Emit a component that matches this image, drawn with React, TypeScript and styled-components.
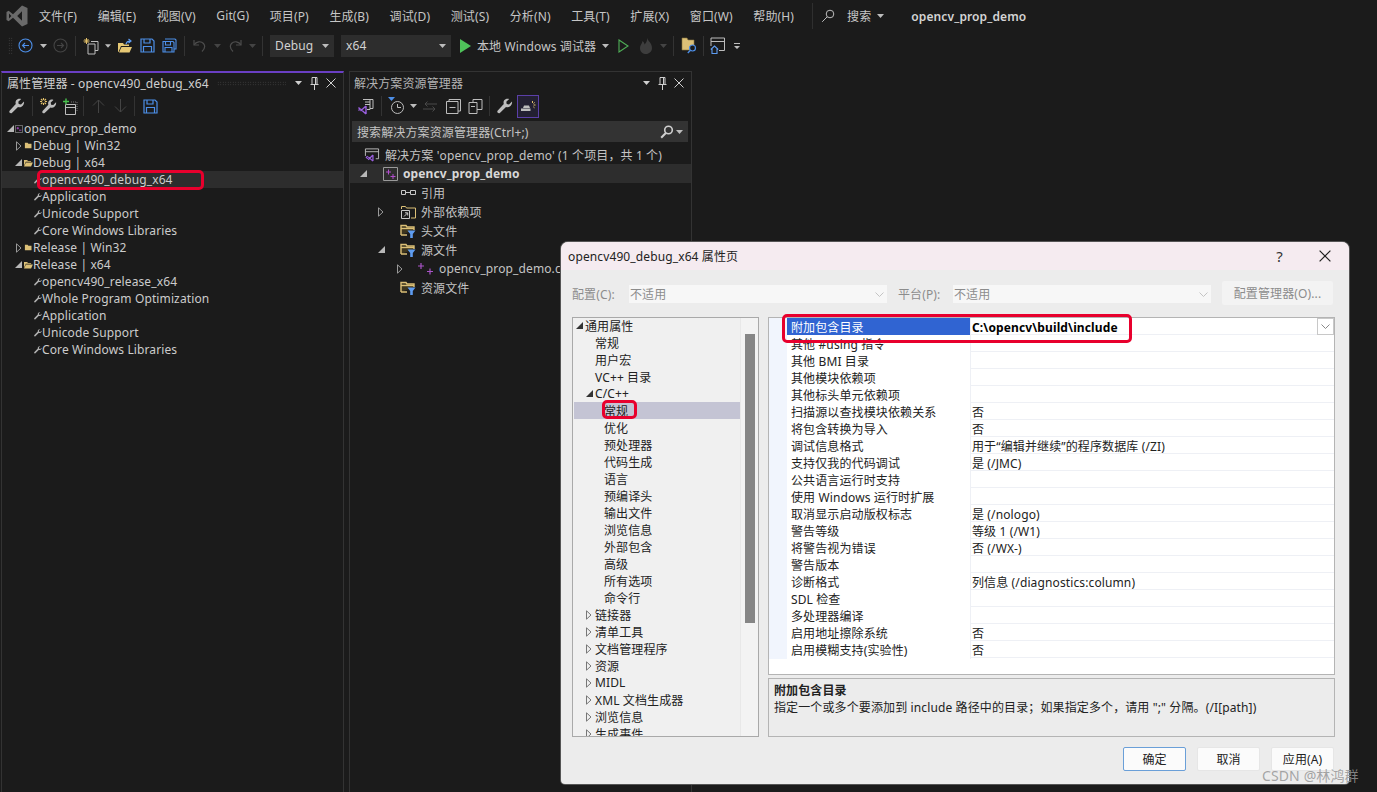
import React from "react";
import styled, { createGlobalStyle } from "styled-components";

const GlobalStyle = createGlobalStyle`
  html, body { margin: 0; padding: 0; background: #1b1b1b; }
  body { font-family: "Noto Sans", "Noto Sans CJK SC", sans-serif; font-size: 12px; letter-spacing: 0.12px; }
  * { box-sizing: border-box; }
`;

const Page = styled.div`
  position: relative;
  width: 1377px;
  height: 792px;
  overflow: hidden;
  background: #1b1b1b;
  color: #cfcfcf;
  display: flex;
  flex-direction: column;
`;

/* ---------- top bars ---------- */
const MenuBar = styled.div`
  height: 32px;
  flex: none;
  display: flex;
  align-items: center;
  padding-left: 5px;
`;
const MenuList = styled.div`
  display: flex;
  gap: 20.6px;
  margin-left: 10px;
  color: #c6c6c6;
  white-space: nowrap;
`;
const MenuSep = styled.div`
  width: 1px;
  height: 26px;
  background: #2f2f2f;
  margin-left: 18px;
`;
const SearchBox = styled.div`
  display: flex;
  align-items: center;
  margin-left: 6px;
  gap: 6px;
  color: #c6c6c6;
  svg { flex: none; }
`;
const SearchLabel = styled.span`
  margin-left: 4px;
`;
const ProjectName = styled.div`
  margin-left: 27px;
  font-weight: 600;
  color: #d4d4d4;
`;
const ToolBar = styled.div`
  height: 27px;
  flex: none;
  display: flex;
  align-items: center;
  padding-left: 8px;
`;
const Grip = styled.div`
  width: 5px;
  height: 18px;
  background-image: radial-gradient(#4a4a4a 0.7px, transparent 0.8px);
  background-size: 2.5px 2.5px;
`;
const Slot = styled.div<{ $w: number }>`
  flex: none;
  width: ${(p) => p.$w}px;
  height: 22px;
  display: flex;
  align-items: center;
  justify-content: center;
`;
const ActiveSlot = styled(Slot)`
  border: 1px solid #5b3fa8;
  background: #232032;
  height: 23px;
`;
const Sep = styled.div<{ $x?: number }>`
  flex: none;
  width: 1px;
  height: 20px;
  background: #333;
  margin: 0 ${(p) => p.$x ?? 0}px;
`;
const Combo = styled.div<{ $w: number }>`
  flex: none;
  width: ${(p) => p.$w}px;
  height: 22px;
  margin-right: 7px;
  padding: 0 5px 0 5px;
  background: #2d2d2d;
  color: #d2d2d2;
  display: flex;
  align-items: center;
  justify-content: space-between;
`;
const RunLabel = styled.div`
  flex: none;
  white-space: nowrap;
  color: #c6c6c6;
  margin-left: 5px;
  width: 121px;
`;

/* ---------- dock panels ---------- */
const Panels = styled.div`
  flex: 1;
  min-height: 0;
  display: flex;
  margin-top: 12px;
  padding-left: 1px;
  gap: 5px;
`;
const Panel = styled.section<{ $active?: boolean }>`
  flex: none;
  width: 343px;
  border: 1px solid #333;
  border-top: ${(p) => (p.$active ? "2px solid #6a3fc4" : "1px solid #333")};
  border-bottom: 0;
  display: flex;
  flex-direction: column;
`;
const PanelTitle = styled.div<{ $active?: boolean }>`
  height: ${(p) => (p.$active ? 20 : 22)}px;
  display: flex;
  align-items: center;
  padding: 0 5px 0 ${(p) => (p.$active ? 5 : 4)}px;
  color: ${(p) => (p.$active ? "#d0d0d0" : "#b4b4b4")};
  white-space: nowrap;
`;
const TitleGrip = styled.div`
  flex: 1;
  height: 5px;
  margin: 0 6px 0 8px;
  background-image: radial-gradient(#444 0.6px, transparent 0.7px);
  background-size: 2.5px 2.5px;
`;
const TitleSpacer = styled.div`
  flex: 1;
`;
const TitleButtons = styled.div`
  display: flex;
  align-items: center;
  gap: 4px;
`;
const PanelTools = styled.div<{ $active?: boolean }>`
  height: 24px;
  margin-top: ${(p) => (p.$active ? 1 : 0)}px;
  display: flex;
  align-items: center;
  padding-left: 3px;
`;
const SearchBar = styled.div`
  height: 21px;
  margin: 3px 3px 0 2px;
  padding: 0 4px 0 5px;
  background: #333;
  color: #c4c4c4;
  display: flex;
  align-items: center;
  justify-content: space-between;
`;
const PropTree = styled.div`
  margin-top: 2px;
`;
const PropRow = styled.div<{ $pad: number; $selected?: boolean }>`
  height: 17px;
  display: flex;
  align-items: center;
  padding-left: ${(p) => p.$pad}px;
  background: ${(p) => (p.$selected ? "#2d2d2d" : "transparent")};
  color: #cccccc;
  white-space: nowrap;
  position: relative;
`;
const SmallSlot = styled.span<{ $w: number }>`
  flex: none;
  width: ${(p) => p.$w}px;
  display: flex;
  align-items: center;
  justify-content: center;
`;
const ArrowSlot = styled.span<{ $w: number }>`
  flex: none;
  width: ${(p) => p.$w}px;
  display: flex;
  align-items: center;
  justify-content: flex-start;
`;
const Mark = styled.div`
  position: absolute;
  border: 3px solid #e8002d;
  border-radius: 5px;
  pointer-events: none;
`;
const PropMark = styled(Mark)`
  left: 35px;
  top: -1px;
  width: 167px;
  height: 20px;
`;
const SolutionTree = styled.div`
  margin-top: 3px;
`;
const SolutionRow = styled.div<{ $pad: number; $selected?: boolean; $bold?: boolean }>`
  height: 19px;
  display: flex;
  align-items: center;
  padding-left: ${(p) => p.$pad}px;
  background: ${(p) => (p.$selected ? "#2d2d2d" : "transparent")};
  font-weight: ${(p) => (p.$bold ? 700 : 400)};
  color: ${(p) => (p.$bold ? "#d8d8d8" : "#c4c4c4")};
  white-space: nowrap;
`;
const RowIcon = styled.span`
  flex: none;
  width: 16px;
  margin-right: 5px;
  display: flex;
  align-items: center;
  justify-content: center;
`;

/* ---------- property page dialog ---------- */
const Dialog = styled.div`
  position: absolute;
  left: 561px;
  top: 242px;
  width: 788px;
  height: 542px;
  background: #ececec;
  border-radius: 7px 7px 4px 4px;
  box-shadow: 0 0 0 1px #555;
  color: #1a1a1a;
  overflow: hidden;
  display: flex;
  flex-direction: column;
`;
const DialogTitle = styled.div`
  height: 28px;
  flex: none;
  background: #f5ebf0;
  display: flex;
  align-items: center;
  padding: 0 18px 0 7px;
  color: #222;
`;
const TitleText = styled.div`
  flex: 1;
`;
const HelpMark = styled.div`
  font-size: 15px;
  margin-right: 36px;
  color: #333;
`;
const ConfigRow = styled.div`
  flex: none;
  height: 24px;
  margin: 11px 15px 0 11px;
  display: flex;
  align-items: center;
  color: #8c8c8c;
`;
const ConfigLabel = styled.div<{ $w: number }>`
  flex: none;
  width: ${(p) => p.$w}px;
  margin-top: 1px;
`;
const ConfigCombo = styled.div`
  flex: none;
  width: 258px;
  height: 18px;
  margin-top: 2px;
  padding: 0 3px 0 1px;
  background: #f7f7f7;
  display: flex;
  align-items: center;
  justify-content: space-between;
  margin-right: 11px;
`;
const ConfigManager = styled.div`
  flex: none;
  width: 111px;
  height: 24px;
  background: #f3f3f3;
  border-radius: 2px;
  display: flex;
  align-items: center;
  justify-content: center;
  white-space: nowrap;
`;
const DialogMain = styled.div`
  flex: none;
  height: 420px;
  margin: 12px 14px 0 11px;
  display: grid;
  grid-template-columns: 187px 567px;
  column-gap: 9px;
`;
const CategoryBox = styled.div`
  border: 1px solid #a9a9a9;
  background: #f0f0f0;
  position: relative;
  overflow: hidden;
  padding: 0 1px;
`;
const CategoryRow = styled.div<{ $pad: number; $selected?: boolean }>`
  height: 17px;
  width: 167px;
  display: flex;
  align-items: center;
  padding-left: ${(p) => p.$pad}px;
  background: ${(p) => (p.$selected ? "#c4c4d4" : "transparent")};
  color: #222;
  white-space: nowrap;
  position: relative;
  &:first-child { margin-top: -1px; }
`;
const CategoryArrow = styled.span`
  flex: none;
  width: 9px;
  display: flex;
  align-items: center;
  justify-content: flex-start;
`;
const CategoryMark = styled(Mark)`
  left: 28px;
  top: -2px;
  width: 35px;
  height: 19px;
`;
const ScrollTrack = styled.div`
  position: absolute;
  top: 0;
  right: 0;
  bottom: 0;
  width: 18px;
  background: #f3f3f3;
  border-left: 1px solid #e8e8e8;
`;
const ScrollThumb = styled.div`
  position: absolute;
  top: 16px;
  left: 4px;
  width: 10px;
  height: 289px;
  background: #868686;
`;
const RightColumn = styled.div`
  display: flex;
  flex-direction: column;
  gap: 3px;
  min-width: 0;
`;
const GridBox = styled.div`
  position: relative;
  height: 358px;
  flex: none;
  background: #fff;
  border: 1px solid #b4b4b4;
`;
const GridRow = styled.div`
  height: 17px;
  display: grid;
  grid-template-columns: 18px 183px 1fr;
  border-bottom: 1px solid #eef0f5;
`;
const Gutter = styled.div`
  background: #f1f5fd;
`;
const NameCell = styled.div<{ $selected?: boolean }>`
  display: flex;
  align-items: center;
  padding-left: 4px;
  background: ${(p) => (p.$selected ? "#3064d2" : "#fff")};
  color: ${(p) => (p.$selected ? "#fff" : "#222")};
  white-space: nowrap;
`;
const ValueCell = styled.div<{ $bold?: boolean }>`
  display: flex;
  align-items: center;
  padding-left: 1px;
  border-left: 1px solid #eef0f5;
  font-weight: ${(p) => (p.$bold ? 700 : 400)};
  color: ${(p) => (p.$bold ? "#000" : "#222")};
  white-space: nowrap;
  min-width: 0;
`;
const DropButton = styled.div`
  position: absolute;
  right: 0;
  top: 0;
  width: 17px;
  height: 17px;
  background: #fff;
  border: 1px solid #c8c8c8;
  display: flex;
  align-items: center;
  justify-content: center;
`;
const GridMark = styled(Mark)`
  left: 13px;
  top: -4px;
  width: 350px;
  height: 29px;
`;
const DescBox = styled.div`
  flex: 1;
  border: 1px solid #b4b4b4;
  padding: 3px 5px;
  line-height: 17px;
  color: #222;
`;
const DescTitle = styled.div`
  font-weight: 700;
`;
const ButtonRow = styled.div`
  flex: none;
  display: flex;
  justify-content: flex-end;
  gap: 11px;
  margin: 10px 15px 0 0;
`;
const DialogButton = styled.div<{ $primary?: boolean }>`
  width: 63px;
  height: 24px;
  background: #fbfbfb;
  border: 1px solid ${(p) => (p.$primary ? "#6a9fd8" : "#e6e6e6")};
  border-radius: 2px;
  color: #222;
  display: flex;
  align-items: center;
  justify-content: center;
`;
const Watermark = styled.div`
  position: absolute;
  left: 1262px;
  top: 765px;
  font-size: 14px;
  color: rgba(150, 150, 150, 0.85);
  white-space: nowrap;
`;

/* ---------- icons ---------- */
const VsLogo = () => (
  <svg width="24" height="24" viewBox="0 0 24 24">
    <path
      fill="#6a6a6a"
      fillRule="evenodd"
      d="M17 1.5 22.500 4v16L17 22.500 8 13.800 3.600 17.200 1.500 16V8l2.100-1.200L8 10.200ZM17 7.200 12.200 12 17 16.800ZM4 9.600v4.800L6.400 12Z"
    />
  </svg>
);
const Caret = ({ c = "#bdbdbd" }: { c?: string }) => (
  <svg width="7" height="4" viewBox="0 0 7 4"><path fill={c} d="M0 0h7L3.500 4z" /></svg>
);
const SearchIcon = () => (
  <svg width="14" height="14" viewBox="0 0 14 14" fill="none" stroke="#bdbdbd">
    <circle cx="9" cy="5" r="3.800" /><path d="M6.200 7.800 1.200 12.800" />
  </svg>
);
const BackIcon = ({ c }: { c: string }) => (
  <svg width="15" height="15" viewBox="0 0 15 15" fill="none" stroke={c} strokeWidth="1.100">
    <circle cx="7.500" cy="7.500" r="6.500" /><path d="M11 7.500H4.500M7 5 4.500 7.500 7 10" />
  </svg>
);
const ForwardIcon = ({ c }: { c: string }) => (
  <svg width="15" height="15" viewBox="0 0 15 15" fill="none" stroke={c} strokeWidth="1.100">
    <circle cx="7.500" cy="7.500" r="6.500" /><path d="M4 7.500h6.500M8 5l2.500 2.500L8 10" />
  </svg>
);
const NewProject = () => (
  <svg width="18" height="18" viewBox="0 0 18 18" fill="none">
    <path d="M5 7h7v10H5z" stroke="#bdbdbd" /><path d="M8 4.500h7v9h-3" stroke="#bdbdbd" />
    <path d="M3.500 1v6M.5 4h6M1.500 2l4 4M5.500 2l-4 4" stroke="#e2c06a" />
  </svg>
);
const OpenFolder = () => (
  <svg width="16" height="16" viewBox="0 0 16 16">
    <path fill="#e6c874" d="M1 5h5l1 1.500h5V8H4L1.500 14H1z" />
    <path fill="#e6c874" d="M4.500 9H15l-2.500 5.500H2z" />
    <path fill="none" stroke="#5e9cf0" strokeWidth="1.200" d="M9 6c.5-2 2-3 4-3M11.500 1 14 3l-2.500 2" />
  </svg>
);
const SaveIcon = () => (
  <svg width="15" height="15" viewBox="0 0 15 15" fill="none" stroke="#4d8fe8" strokeWidth="1.200">
    <path d="M1 1h11l2 2v11H1z" /><path d="M4 1v4h6V1M3.500 14V8.500h8V14" />
  </svg>
);
const SaveAllIcon = () => (
  <svg width="15" height="15" viewBox="0 0 15 15" fill="none" stroke="#4d8fe8" strokeWidth="1.100">
    <path d="M3 1h10l1 1v9h-2" /><path d="M1 3.500h10l1 1V14H1z" /><path d="M3.500 3.500V7h5V3.500M3 14V9.500h7V14" />
  </svg>
);
const UndoIcon = ({ flip }: { flip?: boolean }) => (
  <svg width="15" height="15" viewBox="0 0 15 15" fill="none" stroke="#4d4d4d" strokeWidth="1.200" transform={flip ? "scale(-1 1)" : undefined}>
    <path d="M2 2v5h5" /><path d="M2.200 6.800C4 3.500 9 2.600 11.500 5.500c2 2.400 1 5.500-1.500 8" />
  </svg>
);
const PlayFill = () => (
  <svg width="11" height="14" viewBox="0 0 11 14"><path fill="#4fc25a" d="M0 0 11 7 0 14z" /></svg>
);
const PlayLine = () => (
  <svg width="11" height="14" viewBox="0 0 11 14" fill="none" stroke="#4fae57" strokeWidth="1.100"><path d="M1 1 10 7l-9 6z" /></svg>
);
const FlameIcon = () => (
  <svg width="14" height="16" viewBox="0 0 14 16"><path fill="#3d3d3d" d="M8 0c1 3 5 5 5 10 0 3.500-3 6-6 6s-6-2-6-6c0-3 2-4 2.500-7 1 1 2 2 2 3.500C7 5 8.500 3 8 0z" /></svg>
);
const FolderSearch = () => (
  <svg width="17" height="18" viewBox="0 0 17 18">
    <path fill="#dcc077" stroke="#8a7540" strokeWidth=".6" d="M1 1h5l1 2h6v10H1z" />
    <circle cx="11.500" cy="11" r="3" fill="#1b1b1b" stroke="#4d8fe8" strokeWidth="1.200" />
    <path stroke="#4d8fe8" strokeWidth="1.400" d="M9.500 13.300 6.800 16" />
  </svg>
);
const WindowHome = () => (
  <svg width="16" height="18" viewBox="0 0 16 18" fill="none">
    <path stroke="#bdbdbd" d="M1 9V1h13.500v12.500H9M1 4.500h13.500" />
    <path stroke="#5e9cf0" strokeWidth="1.100" d="M.8 12.500 4.500 9l3.700 3.500M2 12v4.500h5V12" />
  </svg>
);
const Overflow = () => (
  <svg width="8" height="8" viewBox="0 0 8 8"><path fill="#bdbdbd" d="M1 1h6v1H1zM1 4h6L4 7z" /></svg>
);
const PinIcon = () => (
  <svg width="9" height="13" viewBox="0 0 9 13" fill="none" stroke="#cfcfcf"><path d="M2 .5h5v7H2zM5.500.5v7M.5 7.500h8M4.500 8v5" /></svg>
);
const CloseIcon = ({ s = 10, c = "#cfcfcf" }: { s?: number; c?: string }) => (
  <svg width={s} height={s} viewBox="0 0 10 10" fill="none" stroke={c} strokeWidth="1"><path d="M.5.500l9 9M9.500.500l-9 9" /></svg>
);
const Wrench = ({ s = 16, c = "#bdbdbd" }: { s?: number; c?: string }) => (
  <svg width={s} height={s} viewBox="0 0 16 16">
    <path fill={c} d="M15 3.500 12 6.500 9.700 6 9.300 3.800 12.200 1C10.300.200 8.200.800 7.200 2.300 6.400 3.500 6.400 4.900 6.800 6L.8 12.400c-.8.900-.6 1.800 0 2.400.7.600 1.600.6 2.300-.1L9 9c1.500.500 3.200.300 4.500-1 1.300-1.200 1.800-3 1.500-4.500z" />
  </svg>
);
const GearWrench = () => (
  <svg width="18" height="18" viewBox="0 0 18 18">
    <g transform="translate(3 2)"><Wrench s={15} /></g>
    <path stroke="#e2c06a" strokeWidth="1.100" fill="none" d="M4.500 1v7M1 4.500h7M2 2l5 5M7 2 2 7" />
    <circle cx="4.500" cy="4.500" r="1.500" fill="#1b1b1b" />
  </svg>
);
const AddFilter = () => (
  <svg width="16" height="17" viewBox="0 0 16 17" fill="none">
    <path stroke="#bdbdbd" d="M3.500 6.500h10v10h-10zM3.500 9.500h10" />
    <path stroke="#49c24e" strokeWidth="1.400" d="M4 .5v6M1 3.500h6" />
    <path stroke="#777" d="M9 4h6M15 4v9" strokeDasharray="1 1" />
  </svg>
);
const ArrowUp = ({ down }: { down?: boolean }) => (
  <svg width="13" height="14" viewBox="0 0 13 14" fill="none" stroke="#444" transform={down ? "scale(1 -1)" : undefined}>
    <path d="M6.500 14V1M1 6.500 6.500 1 12 6.500" />
  </svg>
);
const ProjectSmall = () => (
  <svg width="8" height="8" viewBox="0 0 10 10" fill="none">
    <path stroke="#8a8a8a" d="M.5.500h9v9h-9z" /><path stroke="#b44fd0" d="M2 4h3M3.500 2.500v3M5 6.500h3" />
  </svg>
);
const FolderClosed = () => (
  <svg width="8" height="7" viewBox="0 0 10 9"><path fill="#dcc077" d="M1 1h3.500l1 1.200H9.500V8H1z" /></svg>
);
const FolderOpen = () => (
  <svg width="10" height="8" viewBox="0 0 11 9"><path fill="#dcc077" d="M1 1h3.500l1 1.200H9v1H3L1 7.500zM3.200 4H11L9 8.500H1z" /></svg>
);
const ExpandOpen = ({ c = "#b8b8b8" }: { c?: string }) => (
  <svg width="7" height="7" viewBox="0 0 7 7"><path fill={c} d="M7 0v7H0z" /></svg>
);
const ExpandClosed = ({ c = "#9a9a9a" }: { c?: string }) => (
  <svg width="6" height="10" viewBox="0 0 6 10" fill="none" stroke={c}><path d="M.5.800 5 5 .5 9.200z" /></svg>
);
const SmallWrench = () => (
  <svg width="8" height="8" viewBox="0 0 9 9"><path fill="#b0b0b0" d="M8.500 2 7 3.500 5.800 3 5.500 1.700 7 .3C5.700-.2 4 .8 4.300 2.800L.5 6.800c-.7.700-.2 1.800.8 1.500L5.300 4.500C7 5 9 3.800 8.500 2z" /></svg>
);
const VsSolution = () => (
  <svg width="17" height="16" viewBox="0 0 17 16" fill="none">
    <path stroke="#bdbdbd" d="M1.500 9V1.500h14V12h-3M1.500 4.500h14" />
    <path stroke="#9a5fe0" strokeWidth="1.300" d="M4 9.200 2.500 10.500 4 12M9.500 8l-5 5M9.500 8v6.500M9.500 14.500 4.500 10" />
  </svg>
);
const SolutionExplorerIcon = () => (
  <svg width="18" height="18" viewBox="0 0 18 18" fill="none">
    <path stroke="#bdbdbd" d="M6 2.500h7v10h-3M8 5h5M8 7.500h5" /><path stroke="#bdbdbd" d="M13 2.500h3v9h-3" />
    <path stroke="#9a5fe0" strokeWidth="1.400" d="M1.500 10.500 3 12 1.500 13.500M9 9l-5.500 5M9 9v8M9 17 3.500 12" />
  </svg>
);
const ClockIcon = () => (
  <svg width="17" height="18" viewBox="0 0 17 18" fill="none">
    <path fill="#4d8fe8" d="M0 0h7L3.500 4z" />
    <circle cx="9.500" cy="10.500" r="6" stroke="#bdbdbd" /><path stroke="#bdbdbd" d="M9.500 7v3.500H13" />
  </svg>
);
const SyncIcon = () => (
  <svg width="14" height="11" viewBox="0 0 14 11" fill="none" stroke="#4a4a4a"><path d="M14 3H2M4.500.5 2 3l2.500 2.500M0 8h12M9.500 5.500 12 8l-2.500 2.500" /></svg>
);
const CollapseIcon = () => (
  <svg width="15" height="15" viewBox="0 0 15 15" fill="none" stroke="#bdbdbd"><path d="M.5 2.500h11.500v12H.5zM3 2.500V.5h11.500V12H12M3.500 8.500h6" /></svg>
);
const CopyIcon = () => (
  <svg width="15" height="15" viewBox="0 0 15 15" fill="none" stroke="#bdbdbd"><path d="M1 3.500h8v11H1zM5 3.500V.5h9v10H9M3 7.500h4" /></svg>
);
const PreviewIcon = () => (
  <svg width="16" height="14" viewBox="0 0 16 14" fill="none">
    <path fill="#bdbdbd" d="M1 9.500h9.500V12H1zM3 9l1-2.500h5l1 2.500" />
    <path stroke="#e2c06a" d="M12.500 2v2M15.500 6h-2M14.500 8.800l-1.200-1M14.700 3.500l-1.200 1" />
  </svg>
);
const LensIcon = () => (
  <svg width="14" height="14" viewBox="0 0 14 14" fill="none" stroke="#d0d0d0" strokeWidth="1.600">
    <circle cx="8.500" cy="5" r="3.800" /><path strokeWidth="2" d="M5.800 8 1.200 12.800" />
  </svg>
);
const RefIcon = () => (
  <svg width="15" height="7" viewBox="0 0 15 7" fill="none" stroke="#c8c8c8"><path d="M.5 1.500h4v4h-4zM4.500 3.500h5M9.500 1.500h5v4h-5z" /></svg>
);
const ExternalIcon = () => (
  <svg width="15" height="14" viewBox="0 0 15 14" fill="none">
    <path stroke="#dcc077" d="M.5 4V1.500h4l1 1.500h9v10H10" /><path stroke="#c8c8c8" d="M.5 5.500h8v8h-8zM3 11.500 6.500 8M4 7.800h2.700v2.700" />
  </svg>
);
const FilterFolder = () => (
  <svg width="16" height="14" viewBox="0 0 16 14" fill="none">
    <path stroke="#dcc077" strokeWidth="1.400" fill="#3d351e" d="M1 11V1.500h5l1 1.500h7V6M1 11h6" />
    <path stroke="#dcc077" strokeWidth="1.400" d="M1 4.500h13" />
    <path fill="#5e9cf0" d="M7.500 6.500h8L12.800 10v4h-2.600v-4z" />
  </svg>
);
const CppIcon = () => (
  <svg width="16" height="14" viewBox="0 0 16 14" fill="none" stroke="#a954c8" strokeWidth="1.200"><path d="M0 4h6M3 1v6M9 9.500h6M12 6.500v6" /></svg>
);
const ProjectIcon = () => (
  <svg width="15" height="14" viewBox="0 0 15 14" fill="none">
    <path stroke="#9a9a9a" d="M.5.500h14v13H.5z" /><path stroke="#b44fd0" d="M3 5h5M5.500 2.500v5M7.500 9.500h5M10 7v5" />
  </svg>
);
const Chevron = ({ c = "#b0b0b0" }: { c?: string }) => (
  <svg width="9" height="5" viewBox="0 0 9 5" fill="none" stroke={c}><path d="M.5.500l4 4 4-4" /></svg>
);

/* ---------- data ---------- */
const menus = ["文件(F)", "编辑(E)", "视图(V)", "Git(G)", "项目(P)", "生成(B)", "调试(D)", "测试(S)", "分析(N)", "工具(T)", "扩展(X)", "窗口(W)", "帮助(H)"];

type PropNode = { label: string; kind: "root" | "closed" | "open" | "leaf"; selected?: boolean };
const propTree: PropNode[] = [
  { label: "opencv_prop_demo", kind: "root" },
  { label: "Debug | Win32", kind: "closed" },
  { label: "Debug | x64", kind: "open" },
  { label: "opencv490_debug_x64", kind: "leaf", selected: true },
  { label: "Application", kind: "leaf" },
  { label: "Unicode Support", kind: "leaf" },
  { label: "Core Windows Libraries", kind: "leaf" },
  { label: "Release | Win32", kind: "closed" },
  { label: "Release | x64", kind: "open" },
  { label: "opencv490_release_x64", kind: "leaf" },
  { label: "Whole Program Optimization", kind: "leaf" },
  { label: "Application", kind: "leaf" },
  { label: "Unicode Support", kind: "leaf" },
  { label: "Core Windows Libraries", kind: "leaf" },
];

const solutionRows = [
  { label: "解决方案 'opencv_prop_demo' (1 个项目，共 1 个)", pad: 14, slot: 0, icon: <VsSolution /> },
  { label: "opencv_prop_demo", pad: 10, slot: 22, arrow: "open", icon: <ProjectIcon />, selected: true, bold: true },
  { label: "引用", pad: 50, slot: 0, icon: <RefIcon /> },
  { label: "外部依赖项", pad: 28, slot: 22, arrow: "closed", icon: <ExternalIcon /> },
  { label: "头文件", pad: 50, slot: 0, icon: <FilterFolder /> },
  { label: "源文件", pad: 28, slot: 22, arrow: "open", icon: <FilterFolder /> },
  { label: "opencv_prop_demo.cpp", pad: 47, slot: 21, arrow: "closed", icon: <CppIcon /> },
  { label: "资源文件", pad: 50, slot: 0, icon: <FilterFolder /> },
];

type Cat = { label: string; pad: number; arrow?: "open" | "closed"; selected?: boolean };
const categories: Cat[] = [
  { label: "通用属性", pad: 2, arrow: "open" },
  { label: "常规", pad: 21 },
  { label: "用户宏", pad: 21 },
  { label: "VC++ 目录", pad: 21 },
  { label: "C/C++", pad: 12, arrow: "open" },
  { label: "常规", pad: 30, selected: true },
  { label: "优化", pad: 30 },
  { label: "预处理器", pad: 30 },
  { label: "代码生成", pad: 30 },
  { label: "语言", pad: 30 },
  { label: "预编译头", pad: 30 },
  { label: "输出文件", pad: 30 },
  { label: "浏览信息", pad: 30 },
  { label: "外部包含", pad: 30 },
  { label: "高级", pad: 30 },
  { label: "所有选项", pad: 30 },
  { label: "命令行", pad: 30 },
  { label: "链接器", pad: 12, arrow: "closed" },
  { label: "清单工具", pad: 12, arrow: "closed" },
  { label: "文档管理程序", pad: 12, arrow: "closed" },
  { label: "资源", pad: 12, arrow: "closed" },
  { label: "MIDL", pad: 12, arrow: "closed" },
  { label: "XML 文档生成器", pad: 12, arrow: "closed" },
  { label: "浏览信息", pad: 12, arrow: "closed" },
  { label: "生成事件", pad: 12, arrow: "closed" },
];

const props: [string, string][] = [
  ["附加包含目录", "C:\\opencv\\build\\include"],
  ["其他 #using 指令", ""],
  ["其他 BMI 目录", ""],
  ["其他模块依赖项", ""],
  ["其他标头单元依赖项", ""],
  ["扫描源以查找模块依赖关系", "否"],
  ["将包含转换为导入", "否"],
  ["调试信息格式", "用于“编辑并继续”的程序数据库 (/ZI)"],
  ["支持仅我的代码调试", "是 (/JMC)"],
  ["公共语言运行时支持", ""],
  ["使用 Windows 运行时扩展", ""],
  ["取消显示启动版权标志", "是 (/nologo)"],
  ["警告等级", "等级 1 (/W1)"],
  ["将警告视为错误", "否 (/WX-)"],
  ["警告版本", ""],
  ["诊断格式", "列信息 (/diagnostics:column)"],
  ["SDL 检查", ""],
  ["多处理器编译", ""],
  ["启用地址擦除系统", "否"],
  ["启用模糊支持(实验性)", "否"],
];

const App = () => {
  return (
    <Page>
      <GlobalStyle />
      <MenuBar>
        <VsLogo />
        <MenuList>
          {menus.map((m) => (
            <span key={m}>{m}</span>
          ))}
        </MenuList>
        <MenuSep />
        <SearchBox>
          <Slot $w={18}><SearchIcon /></Slot>
          <SearchLabel>搜索</SearchLabel>
          <Caret />
        </SearchBox>
        <ProjectName>opencv_prop_demo</ProjectName>
      </MenuBar>

      <ToolBar>
        <Grip />
        <Slot $w={25}><BackIcon c="#4d8fe8" /></Slot>
        <Slot $w={10}><Caret /></Slot>
        <Slot $w={24}><ForwardIcon c="#444" /></Slot>
        <Sep $x={3} />
        <Slot $w={26}><NewProject /></Slot>
        <Slot $w={6}><Caret /></Slot>
        <Slot $w={28}><OpenFolder /></Slot>
        <Slot $w={16}><SaveIcon /></Slot>
        <Slot $w={28}><SaveAllIcon /></Slot>
        <Sep $x={1} />
        <Slot $w={26}><UndoIcon /></Slot>
        <Slot $w={10}><Caret c="#444" /></Slot>
        <Slot $w={26}><UndoIcon flip /></Slot>
        <Slot $w={8}><Caret c="#444" /></Slot>
        <Sep $x={6} />
        <Slot $w={1} />
        <Combo $w={64}>Debug<Caret /></Combo>
        <Combo $w={110}>x64<Caret /></Combo>
        <Slot $w={14}><PlayFill /></Slot>
        <RunLabel>本地 Windows 调试器</RunLabel>
        <Slot $w={14}><Caret /></Slot>
        <Slot $w={22}><PlayLine /></Slot>
        <Slot $w={24}><FlameIcon /></Slot>
        <Slot $w={10}><Caret c="#444" /></Slot>
        <Sep $x={5} />
        <Slot $w={20}><FolderSearch /></Slot>
        <Sep $x={4} />
        <Slot $w={20}><WindowHome /></Slot>
        <Slot $w={18}><Overflow /></Slot>
      </ToolBar>

      <Panels>
        <Panel $active>
          <PanelTitle $active>
            属性管理器 - opencv490_debug_x64
            <TitleGrip />
            <TitleButtons>
              <Slot $w={12}><Caret c="#cfcfcf" /></Slot>
              <Slot $w={12}><PinIcon /></Slot>
              <Slot $w={14}><CloseIcon /></Slot>
            </TitleButtons>
          </PanelTitle>
          <PanelTools $active>
            <Slot $w={24}><Wrench /></Slot>
            <Sep $x={3} />
            <Slot $w={24}><GearWrench /></Slot>
            <Slot $w={20}><AddFilter /></Slot>
            <Sep $x={3} />
            <Slot $w={22}><ArrowUp /></Slot>
            <Slot $w={22}><ArrowUp down /></Slot>
            <Sep $x={3} />
            <Slot $w={24}><SaveIcon /></Slot>
          </PanelTools>
          <PropTree>
            {propTree.map((n, i) => {
              if (n.kind === "leaf") {
                return (
                  <PropRow key={i} $pad={31} $selected={n.selected}>
                    <SmallSlot $w={9}><SmallWrench /></SmallSlot>
                    {n.label}
                    {n.selected && <PropMark />}
                  </PropRow>
                );
              }
              if (n.kind === "root") {
                return (
                  <PropRow key={i} $pad={4}>
                    <SmallSlot $w={8}><ExpandOpen /></SmallSlot>
                    <SmallSlot $w={10}><ProjectSmall /></SmallSlot>
                    {n.label}
                  </PropRow>
                );
              }
              return (
                <PropRow key={i} $pad={13}>
                  <SmallSlot $w={7}>{n.kind === "open" ? <ExpandOpen /> : <ExpandClosed />}</SmallSlot>
                  <SmallSlot $w={11}>{n.kind === "open" ? <FolderOpen /> : <FolderClosed />}</SmallSlot>
                  {n.label}
                </PropRow>
              );
            })}
          </PropTree>
        </Panel>

        <Panel>
          <PanelTitle>
            解决方案资源管理器
            <TitleSpacer />
            <TitleButtons>
              <Slot $w={12}><Caret c="#cfcfcf" /></Slot>
              <Slot $w={12}><PinIcon /></Slot>
              <Slot $w={14}><CloseIcon /></Slot>
            </TitleButtons>
          </PanelTitle>
          <PanelTools>
            <Slot $w={26}><SolutionExplorerIcon /></Slot>
            <Sep $x={2} />
            <Slot $w={24}><ClockIcon /></Slot>
            <Slot $w={10}><Caret /></Slot>
            <Slot $w={24}><SyncIcon /></Slot>
            <Slot $w={22}><CollapseIcon /></Slot>
            <Slot $w={22}><CopyIcon /></Slot>
            <Sep $x={3} />
            <Slot $w={24}><Wrench /></Slot>
            <ActiveSlot $w={22}><PreviewIcon /></ActiveSlot>
          </PanelTools>
          <SearchBar>
            搜索解决方案资源管理器(Ctrl+;)
            <SmallSlot $w={24}><LensIcon /><SmallSlot $w={10}><Caret /></SmallSlot></SmallSlot>
          </SearchBar>
          <SolutionTree>
            {solutionRows.map((r) => (
              <SolutionRow key={r.label} $pad={r.pad} $selected={r.selected} $bold={r.bold}>
                {r.slot > 0 && (
                  <ArrowSlot $w={r.slot}>
                    {r.arrow === "open" ? <ExpandOpen /> : <ExpandClosed />}
                  </ArrowSlot>
                )}
                <RowIcon>{r.icon}</RowIcon>
                {r.label}
              </SolutionRow>
            ))}
          </SolutionTree>
        </Panel>
      </Panels>

      <Dialog>
        <DialogTitle>
          <TitleText>opencv490_debug_x64 属性页</TitleText>
          <HelpMark>?</HelpMark>
          <CloseIcon s={12} c="#222" />
        </DialogTitle>
        <ConfigRow>
          <ConfigLabel $w={57}>配置(C):</ConfigLabel>
          <ConfigCombo>不适用<Chevron c="#c4c4c4" /></ConfigCombo>
          <ConfigLabel $w={55}>平台(P):</ConfigLabel>
          <ConfigCombo>不适用<Chevron c="#c4c4c4" /></ConfigCombo>
          <ConfigManager>配置管理器(O)...</ConfigManager>
        </ConfigRow>
        <DialogMain>
          <CategoryBox>
            {categories.map((c, i) => (
              <CategoryRow key={i} $pad={c.pad} $selected={c.selected}>
                {c.arrow && (
                  <CategoryArrow>
                    {c.arrow === "open" ? <ExpandOpen c="#333" /> : <ExpandClosed c="#777" />}
                  </CategoryArrow>
                )}
                {c.label}
                {c.selected && <CategoryMark />}
              </CategoryRow>
            ))}
            <ScrollTrack><ScrollThumb /></ScrollTrack>
          </CategoryBox>
          <RightColumn>
            <GridBox>
              {props.map(([name, value], i) => (
                <GridRow key={name}>
                  <Gutter />
                  <NameCell $selected={i === 0}>{name}</NameCell>
                  <ValueCell $bold={i === 0}>{value}</ValueCell>
                </GridRow>
              ))}
              <DropButton><Chevron c="#888" /></DropButton>
              <GridMark />
            </GridBox>
            <DescBox>
              <DescTitle>附加包含目录</DescTitle>
              指定一个或多个要添加到 include 路径中的目录；如果指定多个，请用 ";" 分隔。(/I[path])
            </DescBox>
          </RightColumn>
        </DialogMain>
        <ButtonRow>
          <DialogButton $primary>确定</DialogButton>
          <DialogButton>取消</DialogButton>
          <DialogButton>应用(A)</DialogButton>
        </ButtonRow>
      </Dialog>
      <Watermark>CSDN @林鸿群</Watermark>
    </Page>
  );
};

export default App;
